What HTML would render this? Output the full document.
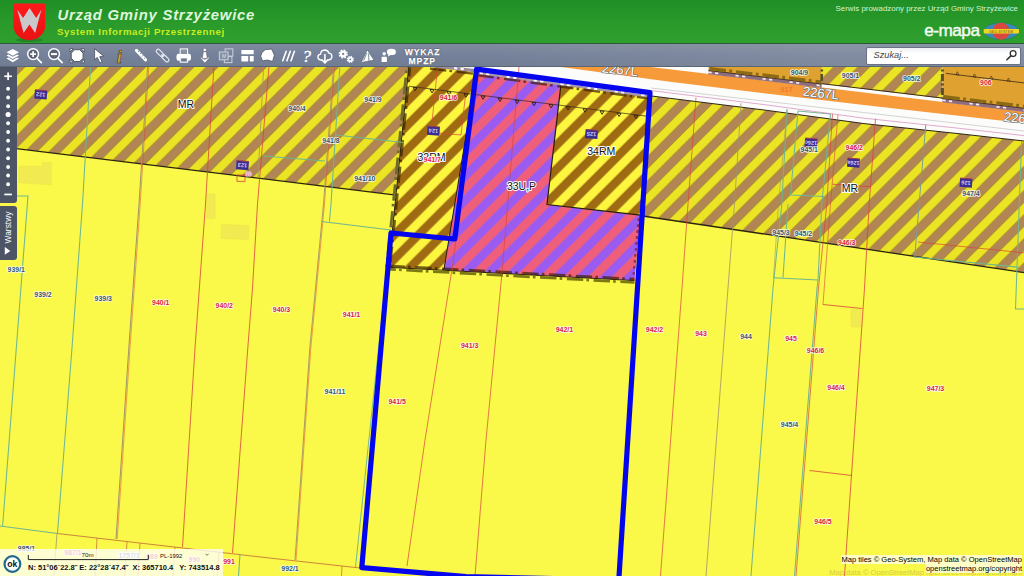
<!DOCTYPE html>
<html lang="pl">
<head>
<meta charset="utf-8">
<title>Urząd Gminy Strzyżewice - System Informacji Przestrzennej</title>
<style>
html,body{margin:0;padding:0;width:1024px;height:576px;overflow:hidden;background:#faf848;font-family:"Liberation Sans",sans-serif;}
#map{position:absolute;left:0;top:0;width:1024px;height:576px;display:block;}
#header{position:absolute;left:0;top:0;width:1024px;height:43px;background:linear-gradient(#1f8e25,#2a9a2b 55%,#2f9f2e);border-bottom:1px solid #2a5a3a;}
#title{position:absolute;left:57.5px;top:6.6px;font-size:14.9px;font-weight:bold;font-style:italic;color:#dff6dc;white-space:nowrap;letter-spacing:0.75px;}
#subtitle{position:absolute;left:57px;top:25.6px;font-size:9.7px;font-weight:bold;color:#c6ee20;white-space:nowrap;letter-spacing:0.6px;}
#serwis{position:absolute;right:6px;top:4.3px;font-size:7.9px;color:#d4f2d0;white-space:nowrap;}
#emapa{position:absolute;left:924.2px;top:20.2px;font-size:17.2px;font-weight:normal;color:#f2fbf0;white-space:nowrap;letter-spacing:-0.5px;-webkit-text-stroke:0.45px #f2fbf0;}
#toolbar{position:absolute;left:0;top:44px;width:1024px;height:23px;background:linear-gradient(to right,rgba(255,255,255,0) 45%,rgba(255,255,255,0.09) 80%),linear-gradient(#7f8b9d,#75819a 50%,#717d92);border-bottom:1px solid #5a6575;box-sizing:border-box;}
#search{position:absolute;left:866px;top:47px;width:155.2px;height:17.7px;background:linear-gradient(#eef0f3,#fff 35%);border:1px solid #687284;box-sizing:border-box;border-radius:2px;}
#search span{position:absolute;left:6.6px;top:2.2px;font-size:9.2px;font-style:italic;color:#444;}
#wykaz{position:absolute;left:401.2px;top:48.1px;width:42px;text-align:center;font-size:8.6px;line-height:9px;font-weight:bold;color:#fff;letter-spacing:0.85px;text-indent:0.85px;text-shadow:0 0 1.2px #2f3747,0 0 1px #3a4252;-webkit-text-stroke:0.25px #fff;}
#zoompanel{position:absolute;left:0;top:67px;width:17px;height:136px;background:#4c5465;border-radius:0 0 3px 0;}
#warstwy{position:absolute;left:0;top:205.5px;width:17px;height:54.5px;background:#4c5465;border-radius:0 3px 3px 0;}
#warstwy span{position:absolute;left:-19px;top:13.4px;width:55px;height:17px;line-height:17px;text-align:center;transform:rotate(-90deg);font-size:8.4px;color:#fff;white-space:nowrap;}
#warstwy svg{position:absolute;left:0;top:0;}
#status{position:absolute;left:0;top:549px;width:223px;height:27px;background:rgba(255,255,255,0.76);}
#coords{position:absolute;left:28px;top:563.2px;font-size:7.5px;font-weight:bold;color:#111;white-space:pre;}
#attr{position:absolute;right:2px;top:554.6px;text-align:right;font-size:7.55px;line-height:9.3px;color:#000;white-space:nowrap;}
#attr2{position:absolute;right:2px;top:568.4px;font-size:7.55px;color:#c9c04a;opacity:.75;white-space:nowrap;}
#attr span{background:rgba(255,255,255,0.7);}
</style>
</head>
<body>
<svg id="map" width="1024" height="576" viewBox="0 0 1024 576" font-family="Liberation Sans, sans-serif">
<defs>
<pattern id="hMR" patternUnits="userSpaceOnUse" width="17.067" height="20" patternTransform="rotate(45)">
<rect x="0" y="0" width="17.067" height="20" fill="#ebe424"/>
<rect x="5.4" y="0" width="8.53" height="20" fill="#b18554"/>
<rect x="5.1" y="0" width="0.8" height="20" fill="#9c8626" opacity="0.8"/><rect x="13.45" y="0" width="0.8" height="20" fill="#9c8626" opacity="0.8"/>
</pattern>
<pattern id="hRM" patternUnits="userSpaceOnUse" width="17.067" height="20" patternTransform="rotate(45)">
<rect x="0" y="0" width="17.067" height="20" fill="#9f6b12"/>
<rect x="5.4" y="0" width="8.53" height="20" fill="#fdf63e"/>
</pattern>
<pattern id="hUP" patternUnits="userSpaceOnUse" width="17.067" height="20" patternTransform="rotate(45)">
<rect x="0" y="0" width="17.067" height="20" fill="#f05f7a"/>
<rect x="5.4" y="0" width="8.53" height="20" fill="#9a5cf0"/>
</pattern>
</defs>
<rect x="0" y="0" width="1024" height="576" fill="#faf848"/>
<g fill="#f1ea50" stroke="#ece34a" stroke-width="0.5">
<polygon points="18.8,166.3 42.5,166.3 42.5,162.5 51.3,162.5 51.3,185 18.8,182.5"/>
<rect x="221.3" y="225" width="27.5" height="14" transform="rotate(2 235 232)"/>
<rect x="206.5" y="194" width="8.5" height="24.5"/>
<rect x="851" y="309" width="10" height="18"/>
</g>
<g id="zones">
<polygon points="0,60 409.4,60 396,195.1 0,146.6" fill="url(#hMR)" />
<polygon points="649,95.7 768,110.5 864,123.6 960,133.8 1024,141 1024,272.5904 641,215.7532" fill="url(#hMR)" />
<polygon points="480,60 1024,60 1024,141 960,133.8 864,123.6 768,110.5 649,95.7 560,84 480,68" fill="#fcfcfb" />
<polygon points="500,48.9204 1024,111.64320000000001 1024,123.3 864,105 768,93.75 668,81.4 565,67.6 400,45.5" fill="#f79a3a" />
<polygon points="708.5,60 822,60 821.6,84.01592 708.5,70.47784999999999" fill="#dfa230" />
<polygon points="822,60 942.4,60 942.4,98.47568 821.6,84.01592" fill="url(#hMR)" />
<polygon points="942.4,60 1024,60 1024,108.2432 942.4,98.47568" fill="#dfa230" />
<polygon points="708.5,70.47784999999999 821.6,84.01592 821.6,87.71592 708.5,74.17784999999999" fill="#8e6e7e" />
<line x1="708.5" y1="70.47784999999999" x2="821.6" y2="84.01592" stroke="#3a2418" stroke-width="0.9" />
<line x1="708.5" y1="72.27785" x2="821.6" y2="85.81592" stroke="#f4ecf4" stroke-width="1.7" stroke-dasharray="3.2 3.4 3.2 17.4"/>
<line x1="709.5" y1="68.59755" x2="821.6" y2="82.01592" stroke="#8a6a12" stroke-width="3.2" stroke-dasharray="16.5 3.4 2.8 4"/>
<polygon points="942.4,98.47568 1024,108.2432 1024,111.9432 942.4,102.17568" fill="#8e6e7e" />
<line x1="942.4" y1="98.47568" x2="1024" y2="108.2432" stroke="#3a2418" stroke-width="0.9" />
<line x1="942.4" y1="100.27568000000001" x2="1024" y2="110.04320000000001" stroke="#f4ecf4" stroke-width="1.7" stroke-dasharray="3.2 3.4 3.2 17.4"/>
<line x1="943.4" y1="96.59537999999999" x2="1024" y2="106.2432" stroke="#8a6a12" stroke-width="3.2" stroke-dasharray="16.5 3.4 2.8 4"/>
<line x1="821.6" y1="83.61591999999999" x2="942.4" y2="98.07567999999999" stroke="#3a2a20" stroke-width="1.0" />
<line x1="822" y1="60" x2="821.6" y2="84.01592" stroke="#55502a" stroke-width="2.6" stroke-dasharray="7 2.5 2 2.5"/>
<line x1="942.4" y1="60" x2="942.4" y2="98.47568" stroke="#55502a" stroke-width="3.0" stroke-dasharray="7 2.5 2 2.5"/>
<polygon points="409.4,60 481,60 443.8,270.3 388.5,267.3" fill="url(#hRM)" />
<polygon points="561,84 649.5,96 640.5,215.2 547,204.5" fill="url(#hRM)" />
<polygon points="477.2,68 561,84 547,204.5 640.5,215.2 634.5,280.6 443.8,270.3" fill="url(#hUP)" />
</g>
<g id="zonelines" fill="none">
<line x1="0" y1="146.6" x2="396" y2="195.1" stroke="#2a2412" stroke-width="1.3" />
<line x1="641" y1="215.7532" x2="1024" y2="272.5904" stroke="#2a2412" stroke-width="1.3" />
<polyline points="649,95.7 768,110.5 864,123.6 960,133.8 1024,141" fill="none" stroke="#2a2418" stroke-width="1.0" />
<polyline points="561,84 547,204.5 640.5,215.2" fill="none" stroke="#241c0c" stroke-width="1.2" />
<polyline points="477.2,68 443.8,270.3" fill="none" stroke="#241c0c" stroke-width="1.0" />
<polyline points="410.79999999999995,60 397.4,195 389.9,267.3" fill="none" stroke="#3c2000" stroke-width="2.5" stroke-dasharray="16.4 3.2 2.6 4.6" opacity="0.7"/>
<polyline points="409.4,60 396,195 388.5,267.3" fill="none" stroke="#1c160a" stroke-width="0.9" />
<polyline points="407.49999999999994,60 394.09999999999997,195 386.59999999999997,267.3" fill="none" stroke="#6e6c28" stroke-width="2.7" stroke-dasharray="16.4 3.2 2.6 4.6" stroke-dashoffset="9"/>
<polyline points="388.5,265.8 444.5,268.8 634.5,279.1" fill="none" stroke="#3c2000" stroke-width="2.5" stroke-dasharray="16.4 3.2 2.6 4.6" opacity="0.7"/>
<polyline points="388.5,267.3 444.5,270.3 634.5,280.6" fill="none" stroke="#1c160a" stroke-width="0.9" />
<polyline points="388.5,269.2 444.5,272.2 634.5,282.5" fill="none" stroke="#7c7814" stroke-width="2.7" stroke-dasharray="16.4 3.2 2.6 4.6" stroke-dashoffset="9"/>
<polyline points="633.0,280.6 639.0,215.2" fill="none" stroke="#7a2030" stroke-width="2.2" stroke-dasharray="2.6 3.4" opacity="0.8"/>
<polyline points="477.5,72.92249 649.3,96.30447" fill="none" stroke="#a898a8" stroke-width="2.3" />
<polyline points="477.5,72.82248999999999 649.3,96.20446999999999" fill="none" stroke="#fbf6fb" stroke-width="2.1" stroke-dasharray="3.2 3.4 3.2 17.4" stroke-dashoffset="25"/>
<polyline points="477.5,75.22249 649.3,98.60446999999999" fill="none" stroke="#3c2000" stroke-width="2.4" stroke-dasharray="16.4 3.2 2.6 4.6" opacity="0.7"/>
</g>
<polygon points="420,60 479,60 479,70.5 420,63.5" fill="#f4f0f4" />
<line x1="430" y1="65.4" x2="478" y2="71.1" stroke="#9a8c98" stroke-width="3.4" />
<line x1="430" y1="65.2" x2="478" y2="70.9" stroke="#fbf6fb" stroke-width="2.2" stroke-dasharray="3.2 3.4 3.2 17.4" stroke-dashoffset="3"/>
<line x1="430" y1="68.6" x2="478" y2="74.3" stroke="#3c2000" stroke-width="2.2" stroke-dasharray="16.4 3.2 2.6 4.6" opacity="0.7"/>
<g id="parcels" fill="none">
<polyline points="17,196 28,196 2.6,526.3" fill="none" stroke="#70b690" stroke-width="1.05" />
<polyline points="91,60 82.5,204 72,348 57.5,533" fill="none" stroke="#70b690" stroke-width="1.05" />
<polyline points="148,60 139,204 128.8,348 116,539" fill="none" stroke="#a0946c" stroke-width="1.0" />
<polyline points="149.2,60 140.2,204 130,348 117.2,539" fill="none" stroke="#d8453a" stroke-width="0.5" />
<polyline points="214.3,60 205.5,204 195,348 182.5,547" fill="none" stroke="#d8453a" stroke-width="0.8" />
<polyline points="269.5,60 257.5,204 252.5,288 247.8,348 232.5,553" fill="none" stroke="#d8453a" stroke-width="0.8" />
<polyline points="264,60 258,177.5" fill="none" stroke="#a0946c" stroke-width="0.8" />
<polyline points="334,60 323.5,204 309.8,348 295,560" fill="none" stroke="#a0946c" stroke-width="0.9" />
<polyline points="335,60 324.5,204 310.8,348 296,560" fill="none" stroke="#d8453a" stroke-width="0.5" />
<polyline points="340.3,60 331,204 329.5,221.5" fill="none" stroke="#70b690" stroke-width="1.05" />
<polyline points="336,135 403.5,142.5" fill="none" stroke="#70b690" stroke-width="1.05" />
<polyline points="263.5,156 324.8,161" fill="none" stroke="#70b690" stroke-width="1.05" />
<polyline points="321.5,221.5 391,230" fill="none" stroke="#70b690" stroke-width="1.05" />
<polyline points="391,230 355.5,567" fill="none" stroke="#70b690" stroke-width="0.95" />
<polyline points="480,67 452,269 425,440 407,566" fill="none" stroke="#d8453a" stroke-width="0.7" />
<polyline points="519,67 501.9,274 486,440 475,576" fill="none" stroke="#d8453a" stroke-width="0.7" />
<polyline points="437.6,67 431,132.5 461,135 466.3,88" fill="none" stroke="#d8453a" stroke-width="0.7" />
<polyline points="696,97.54537815126051 688,204 682,288 660.5,576" fill="none" stroke="#d8453a" stroke-width="0.7" />
<polyline points="741,103.1420168067227 734.5,204 728,288 706,576" fill="none" stroke="#a0946c" stroke-width="0.8" />
<polyline points="787,109.09270833333333 781.8,204 773,288 751,576" fill="none" stroke="#70b690" stroke-width="1.05" />
<polyline points="787,110.09270833333333 778.5,204 773.5,277.8" fill="none" stroke="#a0946c" stroke-width="0.6" />
<polyline points="798,111 790.5,195 824,196.5" fill="none" stroke="#70b690" stroke-width="1.05" />
<polyline points="798,111 830.5,114" fill="none" stroke="#70b690" stroke-width="1.05" />
<polyline points="830.5,114 821.8,204 818,280 817,288 794.5,576" fill="none" stroke="#70b690" stroke-width="1.05" />
<polyline points="788,204 783,277.8" fill="none" stroke="#70b690" stroke-width="1.05" />
<polyline points="773.5,277.8 818,280" fill="none" stroke="#70b690" stroke-width="1.05" />
<polyline points="832.5,113.8 826.8,204 818.5,288 796,576" fill="none" stroke="#d8453a" stroke-width="0.7" />
<polyline points="838,114.5 830.5,204 823,304.5" fill="none" stroke="#d8453a" stroke-width="0.6" />
<polyline points="875.5,118.8 869.2,204 864.5,288 844.5,576" fill="none" stroke="#d8453a" stroke-width="0.8" />
<polyline points="832.5,184.2 870.5,186.8" fill="none" stroke="#d8453a" stroke-width="0.8" />
<polyline points="823,304.5 862.5,308.5" fill="none" stroke="#d8453a" stroke-width="0.8" />
<polyline points="809.5,470.5 852,475.5" fill="none" stroke="#d8453a" stroke-width="0.8" />
<polyline points="649,90.3 768,105.1 864,118.19999999999999 960,128.4 1024,135.6" fill="none" stroke="#d070b0" stroke-width="0.6" />
<polyline points="925.8,124.6 914.6,258" fill="none" stroke="#7d9c9c" stroke-width="1.0" />
<polyline points="914.6,257 1019,267.2" fill="none" stroke="#70b690" stroke-width="1.05" />
<polyline points="1021.6,141 1015.5,309 1024,309" fill="none" stroke="#70b690" stroke-width="1.05" />
<polyline points="918,242 1024,252.8" fill="none" stroke="#d8453a" stroke-width="0.7" />
<polyline points="651,88 1024,131" fill="none" stroke="#c9c9cc" stroke-width="0.8" />
<polyline points="0,526 57.5,533.5" fill="none" stroke="#70b690" stroke-width="1.15" />
<polyline points="57.5,533.5 256,556.5 360,568" fill="none" stroke="#c87838" stroke-width="0.9" />
<polyline points="57,533 54,576" fill="none" stroke="#a0946c" stroke-width="0.8" />
<polyline points="97,538 95,576" fill="none" stroke="#c87838" stroke-width="0.8" />
<polyline points="127,541.5 125,576" fill="none" stroke="#c87838" stroke-width="0.8" />
<polyline points="140,543 138,576" fill="none" stroke="#c87838" stroke-width="0.8" />
<polyline points="175,547 173,576" fill="none" stroke="#c87838" stroke-width="0.8" />
<polyline points="219,552 217,576" fill="none" stroke="#c87838" stroke-width="0.8" />
<polyline points="240,554.5 238.5,576" fill="none" stroke="#70b690" stroke-width="1.05" />
<polyline points="342,566 341.5,576" fill="none" stroke="#c87838" stroke-width="0.8" />
</g>
<g id="bline" fill="none" stroke="#3a2a18" stroke-width="0.7">
<polyline points="409,86.2 647,116.2" fill="none" stroke="#3a2a18" stroke-width="0.7" />
<polygon points="413,87.256 417,87.756 415,90.756" fill="none" stroke="#2a1e10" stroke-width="0.9"/>
<polygon points="430,89.398 434,89.898 432,92.898" fill="none" stroke="#2a1e10" stroke-width="0.9"/>
<polygon points="447,91.54 451,92.04 449,95.04" fill="none" stroke="#2a1e10" stroke-width="0.9"/>
<polygon points="464,93.682 468,94.182 466,97.182" fill="none" stroke="#2a1e10" stroke-width="0.9"/>
<polygon points="481,95.824 485,96.324 483,99.324" fill="none" stroke="#2a1e10" stroke-width="0.9"/>
<polygon points="498,97.966 502,98.466 500,101.466" fill="none" stroke="#2a1e10" stroke-width="0.9"/>
<polygon points="515,100.108 519,100.608 517,103.608" fill="none" stroke="#2a1e10" stroke-width="0.9"/>
<polygon points="532,102.25 536,102.75 534,105.75" fill="none" stroke="#2a1e10" stroke-width="0.9"/>
<polygon points="549,104.392 553,104.892 551,107.892" fill="none" stroke="#2a1e10" stroke-width="0.9"/>
<polygon points="566,106.534 570,107.034 568,110.034" fill="none" stroke="#2a1e10" stroke-width="0.9"/>
<polygon points="583,108.676 587,109.176 585,112.176" fill="none" stroke="#2a1e10" stroke-width="0.9"/>
<polygon points="600,110.818 604,111.318 602,114.318" fill="none" stroke="#2a1e10" stroke-width="0.9"/>
<polygon points="617,112.96 621,113.46 619,116.46" fill="none" stroke="#2a1e10" stroke-width="0.9"/>
<polygon points="634,115.102 638,115.602 636,118.602" fill="none" stroke="#2a1e10" stroke-width="0.9"/>
<polyline points="946,73.4 1024,82.9" fill="none" stroke="#3a2a18" stroke-width="0.8" />
<polygon points="955.8,74.7851 959.0,75.1851 957.4,71.7851" fill="none" stroke="#3a2a18" stroke-width="0.6"/>
<polygon points="972.9,76.86275 976.1,77.26275000000001 974.5,73.86275" fill="none" stroke="#3a2a18" stroke-width="0.6"/>
<polygon points="989.6999999999999,78.90395 992.9,79.30395 991.3,75.90395" fill="none" stroke="#3a2a18" stroke-width="0.6"/>
<polygon points="1006.9,80.99375 1010.1,81.39375000000001 1008.5,77.99375" fill="none" stroke="#3a2a18" stroke-width="0.6"/>
</g>
<polygon points="476.6,69.1 650,92.7 618.8,580 466,576.7 361.8,567.6 391,233 454.8,239" fill="none" stroke="#0505ee" stroke-width="5.2" stroke-linejoin="round"/>
<g id="addr">
<g transform="rotate(4 40.8 94.2)"><rect x="34.599999999999994" y="90.2" width="12.4" height="8.8" fill="#3b2d90"/><line x1="34.8" y1="90.2" x2="46.8" y2="90.2" stroke="#a23a4c" stroke-width="1"/><text x="40.8" y="95.8" font-size="5.6" font-weight="bold" fill="#d2c8f6" text-anchor="middle" transform="rotate(180 40.8 94.2)">122</text></g>
<g transform="rotate(4 242.5 165)"><rect x="236.3" y="161.0" width="12.4" height="8.8" fill="#3b2d90"/><line x1="236.5" y1="161.0" x2="248.5" y2="161.0" stroke="#a23a4c" stroke-width="1"/><text x="242.5" y="166.6" font-size="5.6" font-weight="bold" fill="#d2c8f6" text-anchor="middle" transform="rotate(180 242.5 165)">123</text></g>
<g transform="rotate(4 433.5 130.5)"><rect x="427.3" y="126.5" width="12.4" height="8.8" fill="#3b2d90"/><line x1="427.5" y1="126.5" x2="439.5" y2="126.5" stroke="#a23a4c" stroke-width="1"/><text x="433.5" y="132.1" font-size="5.6" font-weight="bold" fill="#d2c8f6" text-anchor="middle" transform="rotate(180 433.5 130.5)">124</text></g>
<g transform="rotate(4 591.5 133.8)"><rect x="585.3" y="129.8" width="12.4" height="8.8" fill="#3b2d90"/><line x1="585.5" y1="129.8" x2="597.5" y2="129.8" stroke="#a23a4c" stroke-width="1"/><text x="591.5" y="135.4" font-size="5.6" font-weight="bold" fill="#d2c8f6" text-anchor="middle" transform="rotate(180 591.5 133.8)">125</text></g>
<g transform="rotate(4 811 142.5)"><rect x="804.8" y="138.5" width="12.4" height="8.8" fill="#3b2d90"/><line x1="805" y1="138.5" x2="817" y2="138.5" stroke="#a23a4c" stroke-width="1"/><text x="811" y="144.1" font-size="5.6" font-weight="bold" fill="#d2c8f6" text-anchor="middle" transform="rotate(180 811 142.5)">126c</text></g>
<g transform="rotate(4 853.5 162.5)"><rect x="847.3" y="158.5" width="12.4" height="8.8" fill="#3b2d90"/><line x1="847.5" y1="158.5" x2="859.5" y2="158.5" stroke="#a23a4c" stroke-width="1"/><text x="853.5" y="164.1" font-size="5.6" font-weight="bold" fill="#d2c8f6" text-anchor="middle" transform="rotate(180 853.5 162.5)">126a</text></g>
<g transform="rotate(4 966 182.5)"><rect x="959.8" y="178.5" width="12.4" height="8.8" fill="#3b2d90"/><line x1="960" y1="178.5" x2="972" y2="178.5" stroke="#a23a4c" stroke-width="1"/><text x="966" y="184.1" font-size="5.6" font-weight="bold" fill="#d2c8f6" text-anchor="middle" transform="rotate(180 966 182.5)">126</text></g>
<rect x="237" y="175" width="8" height="6.3" fill="none" stroke="#d8453a" stroke-width="0.8"/><text x="248.6" y="175.6" font-size="4.6" font-weight="bold" fill="#e070a0" stroke="#fff" stroke-width="1.2" paint-order="stroke" text-anchor="middle">90</text>
</g>
<g id="labels" font-weight="bold" font-size="6.95" text-anchor="middle" stroke="#fff" stroke-opacity="0.85" stroke-width="1.7" paint-order="stroke" stroke-linejoin="round">
<text x="297" y="111.39999999999999" fill="#30586f">940/4</text>
<text x="373" y="101.89999999999999" fill="#30586f">941/9</text>
<text x="331" y="143.4" fill="#30586f">941/8</text>
<text x="364.8" y="181.4" fill="#30586f">941/10</text>
<text x="16.3" y="271.6" fill="#30586f">939/1</text>
<text x="43" y="297.1" fill="#30586f">939/2</text>
<text x="103.3" y="301.1" fill="#30586f">939/3</text>
<text x="335" y="394.1" fill="#30586f">941/11</text>
<text x="746" y="339.1" fill="#30586f">944</text>
<text x="789.5" y="426.6" fill="#30586f">945/4</text>
<text x="781" y="234.6" fill="#30586f">945/3</text>
<text x="803.5" y="235.9" fill="#30586f">945/2</text>
<text x="809.3" y="152.1" fill="#30586f">945/1</text>
<text x="971" y="196.4" fill="#30586f">947/4</text>
<text x="799.5" y="74.6" fill="#30586f">904/9</text>
<text x="850.5" y="77.6" fill="#30586f">905/1</text>
<text x="911.8" y="81.39999999999999" fill="#30586f">905/2</text>
<text x="290" y="570.6" fill="#30586f">992/1</text>
<text x="26.5" y="550.6" fill="#30586f">985/1</text>
<text x="448.5" y="99.6" fill="#d81c3a">941/6</text>
<text x="432.3" y="162.1" fill="#d81c3a">941/7</text>
<text x="160.8" y="304.90000000000003" fill="#d81c3a">940/1</text>
<text x="224.3" y="308.1" fill="#d81c3a">940/2</text>
<text x="281.5" y="312.40000000000003" fill="#d81c3a">940/3</text>
<text x="351.5" y="316.6" fill="#d81c3a">941/1</text>
<text x="469.7" y="347.90000000000003" fill="#d81c3a">941/3</text>
<text x="397.2" y="403.90000000000003" fill="#d81c3a">941/5</text>
<text x="564.4" y="332.0" fill="#d81c3a">942/1</text>
<text x="654.5" y="332.1" fill="#d81c3a">942/2</text>
<text x="701" y="335.6" fill="#d81c3a">943</text>
<text x="791" y="341.1" fill="#d81c3a">945</text>
<text x="815.5" y="352.6" fill="#d81c3a">946/6</text>
<text x="836" y="389.6" fill="#d81c3a">946/4</text>
<text x="935.5" y="391.1" fill="#d81c3a">947/3</text>
<text x="823" y="524.1" fill="#d81c3a">946/5</text>
<text x="854.3" y="150.1" fill="#d81c3a">946/2</text>
<text x="846.8" y="245.4" fill="#d81c3a">946/3</text>
<text x="985.9" y="84.5" fill="#d81c3a">906</text>
<text x="229" y="564.1" fill="#d81c3a">991</text>
<text x="73" y="554.9" fill="#d81c3a">987/1</text>
<text x="194.4" y="561.8000000000001" fill="#d81c3a">990</text>
<text x="152" y="559.1" fill="#d81c3a">989</text>
<text x="129" y="557.9" fill="#5a80a8">1757/1</text>
<text x="786.5" y="92" fill="#f06a28" stroke="none" font-weight="normal" font-size="7.5">917</text>
</g>
<g id="zlabels" font-size="10.5" text-anchor="middle" fill="#111" stroke="#fff" stroke-width="2" paint-order="stroke" stroke-linejoin="round">
<text x="186" y="108.3">MR</text>
<text x="850" y="192.10000000000002">MR</text>
<text x="601.3" y="155.10000000000002">34RM</text>
<text x="521.5" y="190.4">33U,P</text>
<text x="431.5" y="160.8">32RM</text>
</g>
<text x="432.3" y="162.1" font-weight="bold" font-size="6.95" text-anchor="middle" stroke="#fff" stroke-width="1.7" paint-order="stroke" fill="#e0203c">941/7</text>
<g id="rlabels" font-size="13" text-anchor="middle" fill="#fff" stroke="#70767e" stroke-width="1.3" paint-order="stroke">
<text x="820.5" y="97.6" transform="rotate(6.3 820.5 97.6)">2267L</text>
<text x="619.5" y="74.2" transform="rotate(6.3 619.5 74.2)">2267L</text>
<text x="1021.5" y="123" transform="rotate(6.3 1021.5 123)">2267L</text>
</g>
</svg>
<div id="header"></div>
<div id="title">Urząd Gminy Strzyżewice</div>
<div id="subtitle">System Informacji Przestrzennej</div>
<div id="serwis">Serwis prowadzony przez Urząd Gminy Strzyżewice</div>
<div id="emapa">e-mapa</div>
<div id="toolbar"></div>
<div id="wykaz">WYKAZ<br>MPZP</div>
<div id="search"><span>Szukaj...</span></div>
<div id="zoompanel"><svg width="17" height="135" style="position:absolute;left:0;top:0"><g fill="#fff"><rect x="4.3" y="8.4" width="7.6" height="1.7"/><rect x="7.25" y="5.45" width="1.7" height="7.6"/><circle cx="8.1" cy="21.75" r="1.9"/><circle cx="8.1" cy="30.50" r="1.9"/><circle cx="8.1" cy="39.25" r="1.9"/><circle cx="8.1" cy="47.50" r="2.55"/><circle cx="8.1" cy="56.25" r="1.9"/><circle cx="8.1" cy="65.00" r="1.9"/><circle cx="8.1" cy="73.75" r="1.9"/><circle cx="8.1" cy="82.50" r="1.9"/><circle cx="8.1" cy="91.25" r="1.9"/><circle cx="8.1" cy="100.00" r="1.9"/><circle cx="8.1" cy="108.50" r="1.9"/><circle cx="8.1" cy="117.25" r="1.9"/><rect x="4.3" y="126.6" width="7.6" height="1.7"/></g></svg></div>
<svg id="icons" width="1024" height="72" viewBox="0 0 1024 72" style="position:absolute;left:0;top:0;pointer-events:none" font-family="Liberation Sans, sans-serif">
<defs>
<linearGradient id="sh" x1="0" y1="0" x2="0" y2="1"><stop offset="0" stop-color="#ff1a1a"/><stop offset="1" stop-color="#e81212"/></linearGradient>
</defs>
<!-- shield -->
<ellipse cx="29.3" cy="40" rx="13.5" ry="2" fill="#1c6a22" opacity="0.5"/>
<path d="M14.6 3.6 H44 Q45.2 3.6 45.2 4.8 V26 C45.2 33 39.6 37.5 35.6 39 Q29.3 41.3 23 39 C19 37.5 13.4 33 13.4 26 V4.8 Q13.4 3.6 14.6 3.6 Z" fill="url(#sh)"/>
<polygon points="17.2,9.4 23.1,18.1 29.6,8.1 36.2,18.1 41.4,9.4 35.2,33.1 29.4,24.6 23.6,33.1" fill="#c9c9cc"/>
<!-- layers -->
<g fill="#fff">
<polygon points="12.75,48.9 19,52.3 12.75,55.7 6.5,52.3"/>
<polygon points="6.5,55.4 8.4,54.4 12.75,56.8 17.1,54.4 19,55.4 12.75,58.9"/>
<polygon points="6.5,58.6 8.4,57.6 12.75,60 17.1,57.6 19,58.6 12.75,62.2"/>
</g>
<!-- zoom in / out -->
<g fill="none" stroke="#fff" stroke-linecap="round">
<circle cx="33.1" cy="54.1" r="5.4" stroke-width="1.5" fill="#5b6577"/>
<line x1="37.1" y1="58.3" x2="41.3" y2="62.7" stroke-width="1.7"/>
<path d="M30.2 54.1H36M33.1 51.2V57" stroke-width="1.7" stroke-linecap="butt"/>
<circle cx="54" cy="54.1" r="5.4" stroke-width="1.5" fill="#5b6577"/>
<line x1="58" y1="58.3" x2="62.2" y2="62.7" stroke-width="1.7"/>
<path d="M51 54.1H57" stroke-width="2" stroke-linecap="butt"/>
</g>
<!-- full extent -->
<g fill="#fff" stroke="#4d5666" stroke-width="0.9" stroke-linejoin="round">
<path d="M70 48.6h3.4l-3.4 3.4zM84.3 48.6v3.4l-3.4-3.4zM84.3 62.8h-3.4l3.4-3.4zM70 62.8v-3.4l3.4 3.4z"/>
<path d="M74.6 49.7h5.1l3.4 3.4v5.1l-3.4 3.4h-5.1l-3.4-3.4v-5.1z" stroke-width="1"/>
</g>
<!-- cursor -->
<path d="M94.6 48.7 L94.6 59.6 L97.3 57.4 L99.9 62.7 L102 61.7 L99.7 56.7 L103.5 56 Z" fill="#fff" stroke="#3a4252" stroke-width="0.7" stroke-linejoin="round"/>
<!-- info i -->
<text x="119.4" y="62.8" font-family="Liberation Serif, serif" font-style="italic" font-weight="bold" font-size="18.5" fill="#e6a62e" stroke="#4a3c18" stroke-width="0.6" text-anchor="middle">i</text>
<!-- ruler -->
<g stroke="#fff" fill="none">
<line x1="136.4" y1="50.4" x2="145.6" y2="59.9" stroke-width="3" stroke-linecap="round"/>
<path d="M139.2 50.7l-1.3 1.3M141.3 52.9l-1.3 1.3M143.4 55.1l-1.3 1.3M145.5 57.3l-1.3 1.3" stroke-width="1" stroke="#76839a"/>
</g>
<!-- chain -->
<g fill="none" stroke="#e6e9ef" stroke-width="1.15">
<rect x="-4.3" y="-1.9" width="8.6" height="3.8" rx="1.9" transform="translate(159.9 52.9) rotate(44)"/>
<rect x="-4.3" y="-1.9" width="8.6" height="3.8" rx="1.9" transform="translate(165.3 58.3) rotate(44)"/>
<line x1="161.4" y1="54.4" x2="163.8" y2="56.8" stroke-width="1.3"/>
</g>
<!-- printer -->
<rect x="176.5" y="53.8" width="14.5" height="7" rx="2.2" fill="#fff"/>
<rect x="180.2" y="48.9" width="7.4" height="5.6" fill="#8691a3" stroke="#fff" stroke-width="1"/>
<rect x="180.2" y="57.8" width="7.4" height="4.4" fill="#8691a3" stroke="#fff" stroke-width="1"/>
<path d="M181.8 59.9h4.2" stroke="#4d5666" stroke-width="0.9"/>
<!-- pegman -->
<g fill="#fff" stroke="#4d5666" stroke-width="0.5">
<path d="M200 57.6 Q201.4 56.9 202.6 58 L204.8 59.6 L207 58 Q208.2 56.9 209.8 57.6 L204.8 63.1 Z"/>
<path d="M203.3 51.7h3l1 6.9h-5z"/>
<circle cx="204.8" cy="49.9" r="1.7"/>
</g>
<!-- overlapping squares (disabled) -->
<g fill="none" stroke="#c3cad6" stroke-width="1.15">
<rect x="225.2" y="48.9" width="7.6" height="7.2"/>
<rect x="224.4" y="56.6" width="7.5" height="6"/>
<rect x="219.4" y="52" width="8.7" height="7.8" fill="#8590a3"/>
<path d="M223 54v3.8M225.6 54l-1 3.8" stroke="#dfe3ea" stroke-width="0.9"/>
</g>
<!-- layout -->
<g fill="#fff">
<rect x="241.4" y="49.9" width="12.3" height="4.4" rx="0.6"/>
<rect x="241.4" y="56" width="6.8" height="5.4" rx="0.6"/>
<rect x="249.8" y="56" width="3.9" height="5.4" rx="0.6"/>
</g>
<!-- blob -->
<path d="M262 52.4 L265.4 49.6 L271.6 49.1 L274.4 55 L272.6 61.4 L267 60 L262.6 61 L260.7 56.2 Z" fill="#fff" stroke="#4d5666" stroke-width="0.8" stroke-linejoin="round"/>
<!-- slashes -->
<g stroke="#fff" stroke-width="1.6" stroke-linecap="round"><line x1="282.8" y1="60.8" x2="286.2" y2="51.2"/><line x1="286.9" y1="60.8" x2="290.3" y2="51.2"/><line x1="291" y1="60.8" x2="294.4" y2="51.2"/></g>
<!-- question -->
<text x="306.6" y="62.3" font-size="17.5" fill="#fff" stroke="#fff" stroke-width="0.35" text-anchor="middle" font-style="italic" font-family="Liberation Serif, serif">?</text>
<!-- cloud download -->
<g fill="none" stroke="#fff" stroke-width="1.3" stroke-linejoin="round" stroke-linecap="round">
<path d="M322 60 H320.6 Q317.9 59.6 317.9 57 Q318 54.6 320.6 54.2 Q320.8 50.2 324.8 50 Q328 50 328.9 53.2 Q331.9 53.4 331.9 56.6 Q331.8 59.8 328.6 60 H327.8"/>
<path d="M324.9 54.5V62.4M322.4 60.2L324.9 62.9L327.4 60.2" stroke-width="1.6"/>
</g>
<!-- gears -->
<g fill="none" stroke="#fff">
<circle cx="343.2" cy="54" r="2.3" stroke-width="2.3"/>
<circle cx="343.2" cy="54" r="3.9" stroke-width="1.5" stroke-dasharray="1.75 1.31"/>
<circle cx="350.3" cy="59.4" r="1.8" stroke-width="1.8"/>
<circle cx="350.3" cy="59.4" r="3" stroke-width="1.2" stroke-dasharray="1.35 1"/>
</g>
<!-- pyramid -->
<path d="M361.2 62.4 L367.3 49.9 L373.9 60.1 Z" fill="#fff" stroke="#4d5666" stroke-width="0.5"/>
<path d="M363.6 60.6 L366.8 53 M368.6 53.4 L368.9 60.8" fill="none" stroke="#6b778b" stroke-width="0.9"/>
<!-- person + bubble -->
<g fill="#fff">
<circle cx="384.2" cy="53.8" r="1.7"/>
<rect x="381.6" y="56.7" width="5.3" height="5.4" rx="0.7"/>
<ellipse cx="391.4" cy="51.9" rx="4.5" ry="3.2"/>
<path d="M388.6 53.6 L388 56.4 L391.2 54.8 Z"/>
</g>
<!-- search magnifier -->
<g fill="none" stroke="#333" stroke-width="1.3" stroke-linecap="round">
<circle cx="1013.1" cy="53.6" r="2.9"/>
<line x1="1010.9" y1="55.9" x2="1006.9" y2="59.8" stroke-width="1.6"/>
</g>
<!-- geo-system logo -->
<g>
<ellipse cx="1001.2" cy="31.2" rx="17.7" ry="8.6" fill="#3888b8" stroke="#2a8a3a" stroke-width="0.9"/>
<circle cx="1000.9" cy="31.2" r="8.5" fill="#dc473c"/>
<rect x="983.6" y="29.1" width="35.4" height="4.4" rx="1" fill="#f0d726"/>
<text x="1001.2" y="32.5" font-size="3.2" font-weight="bold" fill="#9a7a18" text-anchor="middle" letter-spacing="0.25">GEO-SYSTEM</text>
</g>
</svg>
<div id="warstwy"><span>Warstwy</span><svg width="17" height="55"><polygon points="4.8,41.1 4.8,48.7 10.3,44.9" fill="#fff"/></svg></div>
<div id="status"></div>
<svg width="230" height="30" viewBox="0 546 230 30" style="position:absolute;left:0;top:546px" font-family="Liberation Sans, sans-serif">
<circle cx="12.4" cy="564" r="7.9" fill="#fff" stroke="#1f6a8c" stroke-width="2.2"/>
<text x="12.3" y="566.7" font-size="8.6" font-weight="bold" text-anchor="middle" fill="#111">ok</text>
<path d="M28.3 555V559.6H148.3V555" fill="none" stroke="#222" stroke-width="1"/>
<text x="87.6" y="557.4" font-size="6.2" text-anchor="middle" fill="#222">70m</text>
<text x="160" y="557.6" font-size="5.9" fill="#111">PL-1992</text>
<path d="M205.6 553.8l1.5 1.5l1.5-1.5" fill="none" stroke="#333" stroke-width="0.7"/>
</svg>
<div id="coords">N: 51°06´22.8˝ E: 22°28´47.4˝  X: 365710.4   Y: 743514.8</div>
<div id="attr2">Map data © OpenStreetMap openstreetmap.org/copyright</div>
<div id="attr"><span>Map tiles © Geo-System, Map data © OpenStreetMap</span><br><span>openstreetmap.org/copyright</span></div>
</body>
</html>
